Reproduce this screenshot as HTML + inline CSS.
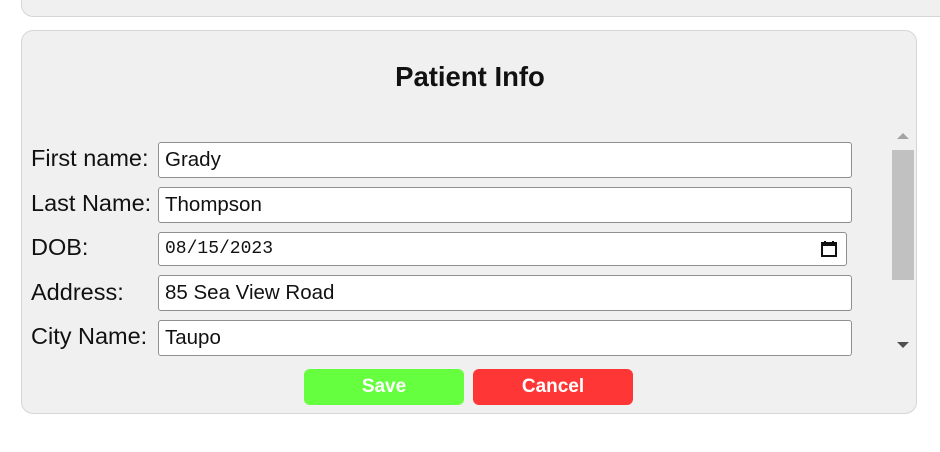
<!DOCTYPE html><html><head><style>
body{margin:0;width:940px;height:452px;background:#fff;position:relative;overflow:hidden;font-family:"Liberation Sans",sans-serif}
.card{position:absolute;background:#f0f0f0;border:1px solid #d6d6d6;border-radius:12px;box-sizing:border-box}
.lbl{position:absolute;left:31px;font-size:23.5px;color:#111}
.in{position:absolute;left:158px;width:694px;height:36px;background:#fff;border:1px solid #8f8f8f;border-radius:3px;box-sizing:border-box;font-size:20.5px;padding:5px 0 0 6px;color:#111}
.btn{position:absolute;top:369px;width:160px;height:36px;border-radius:6px;color:#fff;font-size:19px;text-align:center;line-height:36px;font-weight:bold}
</style></head><body>
<div class="card" style="left:21px;top:-20px;width:940px;height:37px"></div>
<div class="card" style="left:21px;top:30px;width:896px;height:384px"></div>
<div style="position:absolute;left:0;width:940px;top:61px;text-align:center;font-size:27.5px;font-weight:bold;color:#111">Patient Info</div>
<div class="lbl" style="top:145px">First name:</div>
<div class="lbl" style="top:190px">Last Name:</div>
<div class="lbl" style="top:234px">DOB:</div>
<div class="lbl" style="top:279px">Address:</div>
<div class="lbl" style="top:323px">City Name:</div>
<div class="in" style="top:142px">Grady</div>
<div class="in" style="top:187px">Thompson</div>
<div class="in" style="top:232px;width:689px;height:34px;font-family:'Liberation Mono',monospace;font-size:18px;padding-top:6px">08/15/2023
<svg style="position:absolute;right:8px;top:7px" width="18" height="18" viewBox="0 0 18 18"><rect x="2" y="3" width="14" height="13" fill="none" stroke="#111" stroke-width="2"/><rect x="2" y="3" width="14" height="3" fill="#111"/><rect x="4" y="1" width="2" height="3" fill="#111"/><rect x="12" y="1" width="2" height="3" fill="#111"/></svg></div>
<div class="in" style="top:275px">85 Sea View Road</div>
<div class="in" style="top:320px">Taupo</div>
<div style="position:absolute;left:897px;top:133px;width:0;height:0;border-left:6px solid transparent;border-right:6px solid transparent;border-bottom:6px solid #a3a3a3"></div>
<div style="position:absolute;left:892px;top:150px;width:22px;height:130px;background:#c1c1c1"></div>
<div style="position:absolute;left:897px;top:342px;width:0;height:0;border-left:6px solid transparent;border-right:6px solid transparent;border-top:6px solid #505050"></div>
<div class="btn" style="left:304px;background:#66ff3f">Save</div>
<div class="btn" style="left:473px;background:#ff3636">Cancel</div>
</body></html>
